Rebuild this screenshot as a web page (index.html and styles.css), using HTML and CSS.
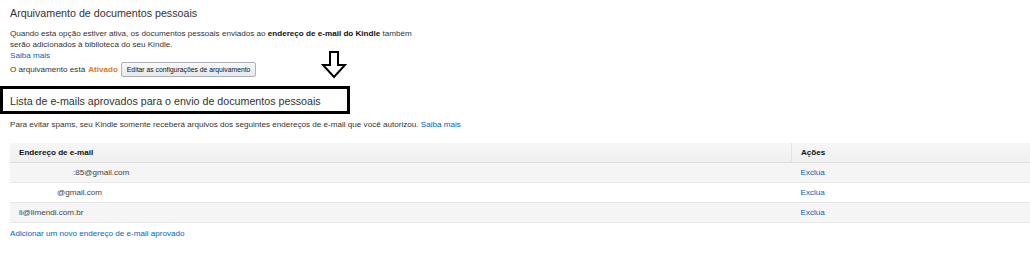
FILE: index.html
```html
<!DOCTYPE html>
<html lang="pt-BR">
<head>
    <meta charset="UTF-8">
    <title>Configurações de documentos pessoais</title>
    <link rel="stylesheet" href="styles.css">
</head>
<body>

    <!-- Arquivamento -->
    <div class="section archive">
        <h2 class="section-title">Arquivamento de documentos pessoais</h2>
        <p class="desc">Quando esta opção estiver ativa, os documentos pessoais enviados ao <b>endereço de e-mail do Kindle</b> também<br>serão adicionados à biblioteca do seu Kindle.</p>
        <a class="link" href="#">Saiba mais</a>
        <div class="status">
            O arquivamento está <span class="on">Ativado</span>
            <button class="btn">Editar as configurações de arquivamento</button>
        </div>

        <!-- seta de destaque -->
        <svg class="arrow" width="26" height="28" viewBox="0 0 26 28">
            <path d="M9 1 H17 V14 H24 L13 26 L2 14 H9 Z" fill="#fff" stroke="#000" stroke-width="2" stroke-linejoin="miter"/>
        </svg>
    </div>

    <!-- Lista de e-mails -->
    <div class="section approved">
        <h2 class="section-title boxed">Lista de e-mails aprovados para o envio de documentos pessoais</h2>
        <p class="desc">Para evitar spams, seu Kindle somente receberá arquivos dos seguintes endereços de e-mail que você autorizou. <a class="link" href="#">Saiba mais</a></p>

        <table class="emails">
            <thead>
                <tr>
                    <th class="col-email">Endereço de e-mail</th>
                    <th class="col-actions">Ações</th>
                </tr>
            </thead>
            <tbody>
                <tr>
                    <td class="hidden-1">:85@gmail.com</td>
                    <td><a class="link" href="#">Exclua</a></td>
                </tr>
                <tr>
                    <td class="hidden-2">@gmail.com</td>
                    <td><a class="link" href="#">Exclua</a></td>
                </tr>
                <tr>
                    <td>li@limendi.com.br</td>
                    <td><a class="link" href="#">Exclua</a></td>
                </tr>
            </tbody>
        </table>

        <a class="link add" href="#">Adicionar um novo endereço de e-mail aprovado</a>
    </div>

</body>
</html>
```

FILE: styles.css
```css
body {
    font-family: "Liberation Sans", Arial, sans-serif;
    font-size: 8.1px;
    color: #333;
    background-color: #fff;
    margin: 0;
    padding: 0 0 0 10px;
}

.section {
    position: relative;
}

.section-title {
    font-size: 10.7px;
    font-weight: normal;
    color: #333;
    margin: 0;
    padding-top: 6px;
    line-height: 14px;
}

.desc {
    margin: 8px 0 0 0;
    line-height: 11px;
}

.desc b {
    color: #111;
}

.link {
    color: #0066c0;
    text-decoration: none;
}

.archive .link {
    display: block;
    line-height: 11px;
}

.status {
    display: flex;
    align-items: center;
    gap: 3px;
    margin-top: 0;
    height: 16px;
}

.on {
    color: #e47911;
    font-weight: bold;
}

.btn {
    font-family: "Liberation Sans", Arial, sans-serif;
    font-size: 6.8px;
    color: #111;
    height: 15px;
    padding: 0 5px;
    background: linear-gradient(#f7f8fa, #e7e9ec);
    border: 1px solid #adb1b8;
    border-radius: 2px;
}

/* seta desenhada por cima */
.arrow {
    position: absolute;
    left: 311px;
    top: 51px;
}

.approved {
    margin-top: 9px;
}

.section-title.boxed {
    margin-left: -10px;
    width: 337px;
    padding: 5px 0 3px 7px;
    border: 3px solid #000;
}

.approved .desc {
    margin-top: 5px;
}

.emails {
    width: 100%;
    border-collapse: collapse;
    margin-top: 13px;
}

.emails th,
.emails td {
    text-align: left;
    height: 19px;
    padding: 0 0 0 9px;
    border-bottom: 1px solid #e7e7e7;
}

.emails th {
    font-weight: bold;
    color: #111;
    background: linear-gradient(#f7f7f7, #efefef);
    border-bottom: 1px solid #ddd;
}

.emails .col-actions {
    width: 229px;
    border-left: 1px solid #e3e3e3;
}

.emails tbody tr:nth-child(odd) td {
    background-color: #f5f5f5;
}

.emails td:first-child {
    color: #444;
}

.emails .hidden-1 {
    padding-left: 63px;
}

.emails .hidden-2 {
    padding-left: 47px;
}

.add {
    display: inline-block;
    margin-top: 6px;
}
```
